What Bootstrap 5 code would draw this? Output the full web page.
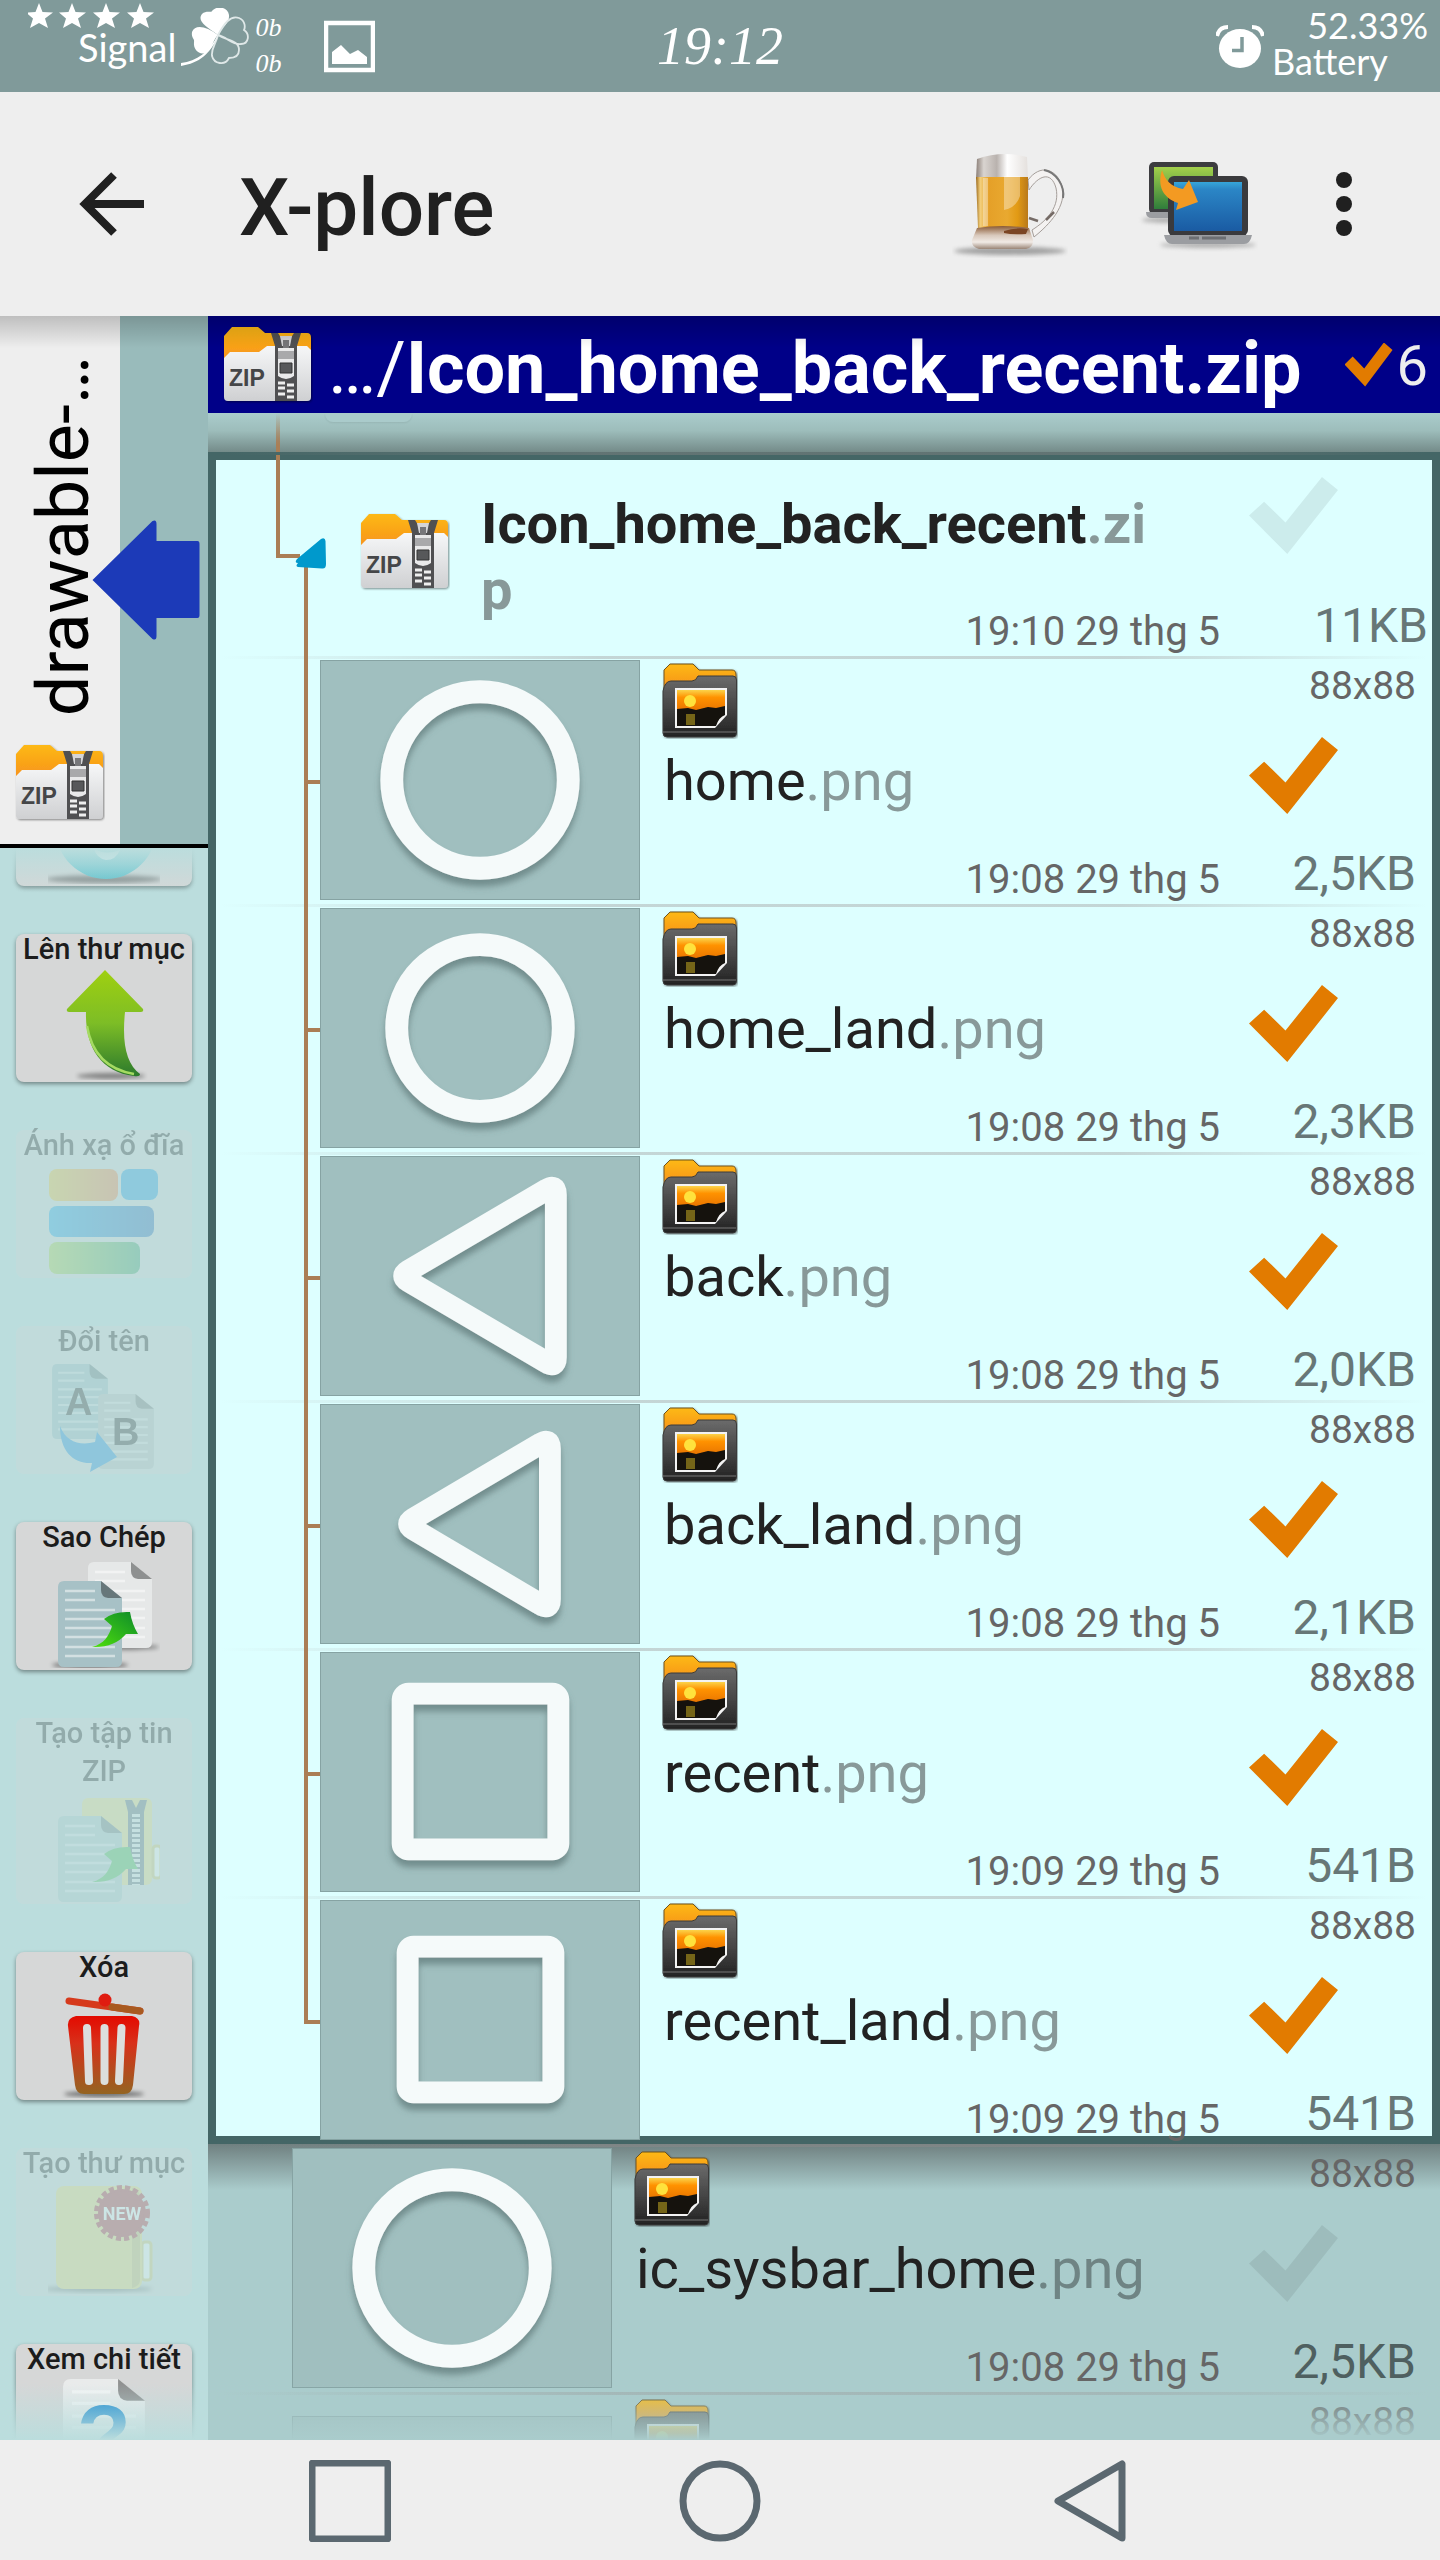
<!DOCTYPE html>
<html lang="vi">
<head>
<meta charset="utf-8">
<meta name="viewport" content="width=device-width, initial-scale=1">
<title>X-plore</title>
<link href="https://cdn.jsdelivr.net/npm/bootstrap@5.3.0/dist/css/bootstrap.min.css" rel="stylesheet">
<style>
  body { font-family: Roboto, "Noto Sans", sans-serif; color: #212121; background: #eee; line-height: 1.2; }
  svg { display: block; flex: none; }
  button { font-family: inherit; }
  .app { height: 100vh; overflow: hidden; }

  /* status bar */
  .statusbar { height: 92px; background: #809a9a; color: #fff; font-family: Lato, sans-serif; }
  .status-side { flex: 1 1 0; height: 92px; }
  .status-word { font-size: 36px; line-height: 36px; }
  .signal-block { padding: 3px 0 0 28px; }
  .signal-block .status-word { font-size: 38px; padding-left: 50px; }
  .clover { margin-left: 5px; }
  .rates { font: italic 26px/36px "Liberation Serif", serif; padding-top: 10px; margin-left: 6px; }
  .picture-note { margin-left: 43px; }
  .alarm { margin-top: 25px; }
  .clock { font: italic 54px/92px "Liberation Serif", serif; }
  .battery-block { width: 168px; padding: 7px 12px 0 0; margin-left: 8px; }

  /* toolbar */
  .toolbar { height: 224px; background: #eee; padding: 0 80px 0 64px; }
  .toolbar h1 { font-size: 80px; line-height: 96px; font-weight: 500; margin: 8px 0 0 79px; color: #202020; }
  .bar-btn { border: 0; background: none; padding: 0; }
  .toolbar-actions { gap: 70px; }

  /* left column */
  .sidecol { width: 208px; background: #bdd; }
  .other-pane { height: 532px; background: #9bb; border-bottom: 4px solid #000; }
  .other-tab { width: 120px; background: #eee; padding-bottom: 22px; gap: 28px; }
  .vertical-name { writing-mode: vertical-rl; transform: rotate(180deg); font-size: 72px; line-height: 84px; color: #000; margin-left: 8px; white-space: nowrap; }
  .swap-btn { top: 204px; left: 92px; }
  .under-shadow::before { content: ""; position: absolute; z-index: 3; inset: 0 0 auto 0; height: 32px; background: linear-gradient(rgba(0,0,0,.2), rgba(0,0,0,0)); pointer-events: none; }
  .tools { padding: 0 16px; }
  .tools-scroll { margin-top: -110px; gap: 48px; }
  .tool-btn { width: 100%; border: 0; border-radius: 8px; background: #d6d7d7; box-shadow: 0 2px 4px rgba(0,0,0,.4); padding: 0 0 2px; font-size: 29px; line-height: 38px; font-weight: 500; color: #1c1c1c; flex: none; white-space: nowrap; }
  .tool-btn span { display: block; margin-top: -4px; }
  .tool-btn svg { margin: 0 auto; }
  .tool-btn:disabled { opacity: .25; box-shadow: none; color: #1c1c1c; }
  .fade-top::before, .fade-end::after { content: ""; position: absolute; z-index: 2; left: 0; right: 0; pointer-events: none; }
  .fade-top::before { top: 0; height: 48px; background: linear-gradient(#bdd, rgba(187,221,221,0)); }
  .fade-end::after { bottom: 0; height: 56px; background: linear-gradient(rgba(187,221,221,0), #bdd); }

  /* file pane */
  .filepane { background: #acc; }
  .filepane.fade-end::after { background: linear-gradient(rgba(170,204,204,0), #acc); }
  .pathbar { height: 97px; background: #008; color: #fff; padding: 0 12px 0 15px; }
  .path-text { font-size: 72px; line-height: 84px; margin-left: 15px; white-space: nowrap; padding-top: 8px; }
  .picked { font-size: 56px; line-height: 66px; color: #eee; padding-top: 2px; }
  .picked-mark { width: 48px; height: 44px; }
  .tick-shape { clip-path: polygon(0 50%, 17% 32%, 41% 59%, 82% 0, 100% 17%, 43% 100%); background: #e27b00; }
  .strip { height: 39px; background: linear-gradient(#acc, #9dbdbb 45%, #748b89); }
  .strip i { margin-left: 5px; width: 87px; height: 9px; border-radius: 0 0 8px 8px; background: #aacbcb; box-shadow: 0 1px 2px rgba(0,0,0,.08); }

  .opened { background: #dff; box-shadow: inset 0 0 0 8px #466; padding-top: 3px; }
  .hairline { background-image: linear-gradient(90deg, rgba(150,140,140,0) 1%, rgba(150,140,140,.36) 32%, rgba(150,140,140,.36) 74%, rgba(150,140,140,0) 99%); background-repeat: no-repeat; background-position: left bottom; background-size: 100% 3px; }
  .thin { height: 3px; }
  .opened > .thin { margin-top: -3px; }
  .entry { height: 248px; }
  .entry-last { height: 245px; }
  .entry-zip { height: 204px; }
  .thumb { width: 320px; height: 240px; margin-top: 1px; background: #a0bfbf; border: 1px solid #86a3a3; }
  .entry-info { display: grid; flex: 1 1 0; height: 245px; min-width: 0; }
  .entry-zip .entry-info { height: 201px; }
  .entry-info > * { grid-area: 1 / 1; }
  .entry-name { font-size: 56px; line-height: 66px; color: #222; padding: 4px 0 0 22px; }
  .entry-name p { margin: 9px 0 0 2px; }
  .entry-zip .entry-name { padding: 36px 60px 0 31px; word-break: break-all; font-weight: 700; }
  .ext { color: #899; }
  .outside .ext { color: #6f8484; }
  .entry-date { font-size: 40px; line-height: 48px; color: #666; align-self: end; justify-self: end; }
  .entry-side { width: 220px; flex: none; height: 245px; padding: 3px 24px 2px 0; text-align: right; color: #666; font-size: 39px; line-height: 48px; }
  .entry-zip .entry-side { height: 201px; padding: 22px 12px 2px 0; }
  .entry-size { font-size: 48px; line-height: 56px; color: #677777; }
  .outside .entry-size { color: #4f6060; }
  .mark-box { appearance: none; width: 89px; height: 77px; border: 0; margin: 27px 0 0 29px; background: rgba(0,0,0,.075); clip-path: polygon(0 50%, 17% 32%, 41% 59%, 82% 0, 100% 17%, 43% 100%); }
  .mark-box:checked { background: #e27b00; }
  .entry-zip .mark-box { margin-top: 0; }
  .outside { background: linear-gradient(#6f8080, #acc 46px); }
  .outside .tree-gap { width: 84px; flex: none; }
  .late-thumb { margin-top: 21px; }
  .zip-at { margin-top: 58px; }

  /* navigation keys */
  .navkeys { height: 120px; background: #eee; padding-top: 2px; }
  .navkeys > div { width: 77%; }
</style>
</head>
<body>
<svg width="0" height="0" class="position-absolute" aria-hidden="true">
  <defs>
    <linearGradient id="gOr" x1="0" y1="0" x2="0" y2="1"><stop offset="0" stop-color="#fdb913"/><stop offset="1" stop-color="#f68b1f"/></linearGradient>
    <linearGradient id="gWh" x1="0" y1="0" x2="0" y2="1"><stop offset="0" stop-color="#f6f7f8"/><stop offset="1" stop-color="#cfd0d2"/></linearGradient>
    <linearGradient id="gDk" x1="0" y1="0" x2="0" y2="1"><stop offset="0" stop-color="#6b6b6b"/><stop offset="1" stop-color="#222"/></linearGradient>
    <linearGradient id="gSky" x1="0" y1="0" x2="0" y2="1"><stop offset="0" stop-color="#fbd34a"/><stop offset=".35" stop-color="#ff9200"/><stop offset="1" stop-color="#e87400"/></linearGradient>
    <linearGradient id="gGr" x1="0" y1="0" x2="0" y2="1"><stop offset="0" stop-color="#9fd010"/><stop offset=".5" stop-color="#7dbd26"/><stop offset="1" stop-color="#2c7a2c"/></linearGradient>
    <linearGradient id="gRed" x1="0" y1="0" x2="0" y2="1"><stop offset="0" stop-color="#e30a00"/><stop offset=".35" stop-color="#d8301a"/><stop offset="1" stop-color="#946422"/></linearGradient>
    <linearGradient id="gArr" x1="1" y1="0" x2="0" y2="1"><stop offset="0" stop-color="#0c8a2a"/><stop offset="1" stop-color="#4fe00c"/></linearGradient>
    <linearGradient id="gTeal" x1="0" y1="0" x2="0" y2="1"><stop offset="0" stop-color="#cdeef0"/><stop offset="1" stop-color="#4fbcc9"/></linearGradient>
    <linearGradient id="gD1"><stop offset="0" stop-color="#f0c030"/><stop offset="1" stop-color="#f07c3c"/></linearGradient>
    <linearGradient id="gD2"><stop offset="0" stop-color="#12a0e8"/><stop offset="1" stop-color="#1a62b4"/></linearGradient>
    <linearGradient id="gD3"><stop offset="0" stop-color="#a8d040"/><stop offset="1" stop-color="#2f9a60"/></linearGradient>
    <linearGradient id="gBeer" x1="0" y1="0" x2="1" y2="0"><stop offset="0" stop-color="#9c6a1c"/><stop offset=".08" stop-color="#f3cf7c"/><stop offset=".25" stop-color="#e5a028"/><stop offset=".6" stop-color="#e9a930"/><stop offset=".8" stop-color="#e29a14"/><stop offset="1" stop-color="#b9791a"/></linearGradient>
    <linearGradient id="gGlass" x1="0" y1="0" x2="1" y2="0"><stop offset="0" stop-color="#8b7f78"/><stop offset=".15" stop-color="#d9d4d0"/><stop offset=".4" stop-color="#b9b2ae"/><stop offset=".6" stop-color="#fff"/><stop offset="1" stop-color="#e4e0dd"/></linearGradient>
    <linearGradient id="gBase" x1="0" y1="0" x2="0" y2="1"><stop offset="0" stop-color="#8a5a35"/><stop offset=".4" stop-color="#d8c8bb"/><stop offset=".7" stop-color="#f1ebe6"/><stop offset="1" stop-color="#9a8576"/></linearGradient>
    <linearGradient id="gScrG" x1="0" y1="0" x2="0" y2="1"><stop offset="0" stop-color="#a3d04b"/><stop offset="1" stop-color="#2f7d3b"/></linearGradient>
    <linearGradient id="gScrB" x1="0" y1="0" x2="0" y2="1"><stop offset="0" stop-color="#36a6da"/><stop offset=".15" stop-color="#2b86c6"/><stop offset="1" stop-color="#1a5ba3"/></linearGradient>
    <filter id="fS" x="-20%" y="-20%" width="140%" height="150%"><feDropShadow dx="0" dy="7" stdDeviation="3" flood-color="#4d6363" flood-opacity=".55"/></filter>
    <filter id="fs1" x="-10%" y="-10%" width="120%" height="125%"><feDropShadow dx="1" dy="1" stdDeviation="1" flood-opacity=".45"/></filter>
    <filter id="fB" x="-20%" y="-100%" width="140%" height="300%"><feGaussianBlur stdDeviation="2"/></filter>
  </defs>

  <symbol id="zipfile" viewBox="0 0 90 78">
    <g filter="url(#fs1)">
      <path d="M1 10L9 1H35L42 7H84Q88 7 88 12V40H1Z" fill="url(#gOr)"/>
      <path d="M1 32L7 26H36L44 20H84L88 24V71Q88 75 84 75H5Q1 75 1 71Z" fill="url(#gWh)"/>
    </g>
    <path d="M48 7H55L60 15H66L71 7H78L74 20V75H52V20Z" fill="#505052"/>
    <path d="M57 10H69L67 20H59Z" fill="#d5d5d7"/>
    <path d="M60 14H66V22H60Z" fill="#77777a"/>
    <path d="M55 22H71V50Q63 56 55 50Z" fill="#e9e9ea"/>
    <path d="M55 25H71V33H55Z" fill="#a9a9ab"/>
    <path d="M57 37H69V47H57Z" fill="#57585a" stroke="#333"/>
    <path d="M55 57H62M64 59H71M55 62H62M64 65H71M55 68H62M64 71H71" stroke="#eee" stroke-width="3"/>
    <text x="6" y="60" font-family="Liberation Sans, Arial, sans-serif" font-weight="700" font-size="23" fill="#454648">ZIP</text>
  </symbol>

  <symbol id="pngfile" viewBox="0 0 76 76">
    <g filter="url(#fs1)">
      <path d="M2 24V7L8 1H31L37 7H70Q74 7 74 12V30H2Z" fill="url(#gOr)" stroke="#6f531f"/>
      <path d="M1 28Q3 18 9 18H30Q34 18 36 13H71Q74.500 13 74.500 17V70Q74.500 74 71 74H5Q1 74 1 70Z" fill="url(#gDk)" stroke="#3a3a3a"/>
    </g>
    <path d="M1 69H74" stroke="#777"/>
    <path d="M13 25H65V52L53 65H13Z" fill="#f3f3f3"/>
    <path d="M15 27H63V48H15Z" fill="url(#gSky)"/>
    <path d="M15 46L26 45L34 47L46 44L54 45L63 43V52Q57 54 54 63H15Z" fill="#15120d"/>
    <path d="M24 51H33V62H24Z" fill="#8d7a1c" opacity=".8"/>
    <circle cx="28" cy="38" r="6" fill="#ffe23c"/>
  </symbol>

  <symbol id="ring" viewBox="0 0 320 240"><circle cx="160" cy="120" r="89" fill="none" stroke="#f5fafa" stroke-width="23" filter="url(#fS)"/></symbol>
  <symbol id="ringland" viewBox="0 0 320 240"><circle cx="160" cy="120" r="84" fill="none" stroke="#f5fafa" stroke-width="23" filter="url(#fS)"/></symbol>
  <symbol id="tri" viewBox="0 0 320 240"><path d="M88 114.600L227 33Q236.500 27 236.500 38V202Q236.500 213 227 207L88 125.400Q79 120 88 114.600Z" fill="none" stroke="#f5fafa" stroke-width="22" stroke-linejoin="round" filter="url(#fS)"/></symbol>
  <symbol id="triland" viewBox="0 0 320 240"><path d="M93 114.600L221 39Q230.500 33 230.500 44V196Q230.500 207 221 201L93 125.400Q84 120 93 114.600Z" fill="none" stroke="#f5fafa" stroke-width="22" stroke-linejoin="round" filter="url(#fS)"/></symbol>
  <symbol id="sq" viewBox="0 0 320 240"><rect x="82" y="41" width="157" height="157" rx="6" fill="none" stroke="#f5fafa" stroke-width="22" filter="url(#fS)"/></symbol>
  <symbol id="sqland" viewBox="0 0 320 240"><rect x="87" y="46" width="147" height="147" rx="6" fill="none" stroke="#f5fafa" stroke-width="22" filter="url(#fS)"/></symbol>

  <symbol id="branch" viewBox="0 0 112 248"><path d="M98 0V248M98 123H112" stroke="#aa7e55" stroke-width="4" fill="none"/></symbol>
  <symbol id="sheet" viewBox="0 0 64 86">
    <path d="M6 0H43L64 17V80Q64 86 58 86H6Q0 86 0 80V6Q0 0 6 0Z"/>
    <path d="M43 0L64 17H50Q43 16 43 9Z" fill="#000" opacity=".38"/>
    <path d="M7 10H37M7 19H37M7 29H57M7 38H57M7 47H57M7 56H57M7 66H57M7 75H57" stroke="#fff" stroke-width="2.500" opacity=".5"/>
  </symbol>
</svg>

<div class="app d-flex flex-column">
  <header class="statusbar d-flex justify-content-between flex-shrink-0">
    <div class="status-side d-flex">
      <div class="signal-block">
        <svg width="128" height="26" viewBox="0 0 128 26" fill="#fff"><path id="star" d="M11 0L14.500 9L25 9.500L17 15.500L20 25L11 20L2 25L5 15.500L-2 9.500L7.500 9Z"/><use href="#star" x="33"/><use href="#star" x="67"/><use href="#star" x="101"/></svg>
        <div class="status-word">Signal</div>
      </div>
      <svg class="clover mt-2" width="68" height="60" viewBox="0 0 68 60">
        <path d="M37 27C24 18 16 13 21 6C25 2 30 5 31 3C36 -3 47 -1 48 7C49 15 41 19 37 27Z" fill="#fff"/>
        <path d="M37 27C25 18 14 16 11 24C10 30 14 31 13 34C12 43 20 48 26 44C32 40 31 33 37 27Z" fill="#fff"/>
        <path d="M37 27C43 16 49 7 58 10C65 13 64 20 63 22C69 26 68 36 60 36C51 37 46 29 37 27C46 33 58 32 58 42C58 50 50 50 48 50C44 58 33 56 31 48C30 40 35 36 37 27Z" fill="none" stroke="#dfe8e8" stroke-width="1.800"/>
        <path d="M37 27C30 46 18 55 0 58V55C16 53 28 44 37 27Z" fill="#fff"/>
      </svg>
      <div class="rates"><div>0b</div><div>0b</div></div>
      <svg class="picture-note" width="51" height="92" viewBox="0 -21 51 92"><rect x="2" y="2" width="47" height="47" fill="none" stroke="#fff" stroke-width="4.500"/><path d="M8 43V31L17 24L26 33L34 29L43 36V43Z" fill="#fff"/></svg>
    </div>
    <time class="clock">19:12</time>
    <div class="status-side d-flex justify-content-end">
      <svg class="alarm" width="48" height="44" viewBox="0 0 48 44"><ellipse cx="24" cy="23.500" rx="21" ry="19.500" fill="#fff"/><path d="M1 11Q3 2 12 2M47 11Q45 2 36 2" stroke="#fff" stroke-width="4" fill="none"/><path d="M26 12V25.500H16" stroke="#809a9a" stroke-width="3.500" fill="none"/></svg>
      <div class="battery-block status-word"><div class="text-end">52.33%</div><div>Battery</div></div>
    </div>
  </header>

  <nav class="toolbar d-flex align-items-center flex-shrink-0">
    <button class="bar-btn" aria-label="Back"><svg width="96" height="96" viewBox="0 0 96 96"><path d="M80 48H22M50 19L21 48L50 77" fill="none" stroke="#202020" stroke-width="8"/></svg></button>
    <h1>X-plore</h1>
    <div class="toolbar-actions d-flex align-items-center ms-auto">
      <button class="bar-btn" aria-label="Donate"><svg width="116" height="108" viewBox="0 0 116 108">
        <ellipse cx="58" cy="101" rx="56" ry="4" fill="#777" opacity=".65" filter="url(#fB)"/>
        <path d="M76 30C88 14 104 18 110 36C115 56 98 74 82 87L80 80C96 70 108 56 104 38C99 20 86 26 77 40Z" fill="#f4f2f1" stroke="#a59e9a" stroke-width="1"/>
        <path d="M92 20C104 22 113 36 111 48" stroke="#777" stroke-width="2" fill="none"/><path d="M77 68L86 71M94 70L102 62" stroke="#756b66" stroke-width="2.500"/>
        <path d="M25 9Q50 0 75 7L76 29H24Z" fill="url(#gGlass)"/>
        <path d="M24 27H76V78H26Z" fill="url(#gBeer)"/>
        <path d="M31 28H36V76H31ZM52 26H68V46Q64 58 52 60Z" fill="#fff" opacity=".35"/>
        <path d="M25 78Q50 74 77 78L81 90Q81 98 74 99H27Q19 97 20 90Z" fill="url(#gBase)"/>
        <path d="M52 81Q64 77 76 79L74 84Q60 85 52 83Z" fill="#7b4523"/>
      </svg></button>
      <button class="bar-btn" aria-label="Wi-Fi"><svg width="120" height="96" viewBox="0 0 120 96">
        <ellipse cx="70" cy="89" rx="48" ry="3" fill="#888" opacity=".6" filter="url(#fB)"/><ellipse cx="30" cy="64" rx="26" ry="3" fill="#888" opacity=".6" filter="url(#fB)"/>
        <rect x="11" y="6" width="69" height="52" rx="5" fill="#3c3c3f"/><rect x="16" y="11" width="59" height="42" fill="url(#gScrG)"/>
        <path d="M8 56H32V62H14Q8 62 8 56Z" fill="#9b9da1"/>
        <rect x="30" y="20" width="80" height="60" rx="6" fill="#3a3a3d"/><rect x="36" y="26" width="68" height="49" fill="url(#gScrB)"/>
        <path d="M26 79H114Q112 88 106 88H34Q28 88 26 79Z" fill="#9b9da1"/><path d="M51 82H61M64 82H88" stroke="#6d6f73" stroke-width="3"/>
        <path d="M24 14C27 24 33 31 45 33L51 24L60 46L38 54L40 47C25 42 19 30 24 14Z" fill="#f39a22"/>
      </svg></button>
      <button class="bar-btn" aria-label="Menu"><svg width="32" height="68" viewBox="0 0 32 68" fill="#202020"><circle cx="16" cy="10" r="8"/><circle cx="16" cy="34" r="8"/><circle cx="16" cy="58" r="8"/></svg></button>
    </div>
  </nav>

  <div class="d-flex flex-grow-1 overflow-hidden position-relative under-shadow">
    <aside class="sidecol d-flex flex-column flex-shrink-0">
      <div class="other-pane position-relative flex-shrink-0 d-flex">
        <div class="other-tab d-flex flex-column justify-content-end align-items-center">
          <div class="vertical-name">drawable-…</div>
          <svg width="90" height="78"><use href="#zipfile"/></svg>
        </div>
        <button class="bar-btn swap-btn position-absolute" aria-label="Switch pane"><svg width="108" height="120" viewBox="0 0 107 120"><path d="M0 60L60 1Q64 -1 64 4V21H105Q107 21 107 24V95Q107 98 105 98H64V116Q64 121 60 119Z" fill="#1c3ab8"/></svg></button>
      </div>
      <div class="tools flex-grow-1 overflow-hidden position-relative fade-top fade-end">
        <div class="tools-scroll d-flex flex-column">
          <button class="tool-btn" aria-label="Web"><span>&nbsp;</span>
            <svg width="112" height="112"><ellipse cx="56" cy="107" rx="58" ry="4" opacity=".4" filter="url(#fB)"/><circle cx="58" cy="57" r="50" fill="url(#gTeal)"/><path d="M46 76Q56 84 72 78Q68 88 58 88Q48 86 46 76Z" fill="#d5eef0"/></svg></button>
          <button class="tool-btn"><span>Lên thư mục</span>
            <svg width="112" height="112"><ellipse cx="63" cy="108" rx="34" ry="3" opacity=".4" filter="url(#fB)"/><path d="M57 2L95 41Q96 44 93 44H77Q72 92 92 106Q92 109 86 108C52 104 37 78 38 44H21Q18 44 19 41Z" fill="url(#gGr)"/><path d="M39 58C44 88 62 102 86 106" stroke="#a5db62" stroke-width="2.500" fill="none"/></svg></button>
          <button class="tool-btn" disabled><span>Ánh xạ ổ đĩa</span>
            <svg width="112" height="112"><rect x="1" y="5" width="69" height="32" rx="8" fill="url(#gD1)"/><rect x="73" y="5" width="37" height="31" rx="8" fill="#0e96e0"/><rect x="1" y="42" width="105" height="31" rx="8" fill="url(#gD2)"/><rect x="1" y="78" width="91" height="32" rx="8" fill="url(#gD3)"/></svg></button>
          <button class="tool-btn" disabled><span>Đổi tên</span>
            <svg width="112" height="112" font-family="Liberation Sans, Arial, sans-serif" font-weight="700"><use href="#sheet" x="4" y="4" width="56" height="75" fill="#94b4ba"/><text x="17" y="55" font-size="38" fill="#222">A</text><use href="#sheet" x="50" y="34" width="56" height="75" fill="#b4b8b8"/><text x="64" y="85" font-size="38" fill="#222">B</text><path d="M12 66C18 82 32 86 47 82L49 72L69 97L42 112L44 103C26 104 12 92 12 66Z" fill="#0e86dc"/></svg></button>
          <button class="tool-btn"><span>Sao Chép</span>
            <svg width="112" height="112"><ellipse cx="75" cy="91" rx="36" ry="3" opacity=".4" filter="url(#fB)"/><ellipse cx="42" cy="109" rx="38" ry="3" opacity=".5" filter="url(#fB)"/><use href="#sheet" x="40" y="6" width="64" height="86" fill="#e6e8e8"/><use href="#sheet" x="10" y="25" width="64" height="86" fill="#a7c1c6"/><path d="M44 91C56 88 61 80 64 70L56 63Q66 55 82 56Q84 68 90 78L78 78Q66 92 44 91Z" fill="url(#gArr)"/></svg></button>
          <button class="tool-btn" disabled><span>Tạo tập tin<br>ZIP</span>
            <svg width="112" height="112"><rect x="34" y="8" width="70" height="87" rx="6" fill="#f0dc80"/><rect x="105" y="56" width="8" height="32" rx="3" fill="#fff" stroke="#d9c56b" stroke-width="3"/><path d="M77 10H84L88 18L92 10H99L96 22V95H80V22Z" fill="#5a6a74"/><path d="M88 24V95" stroke="#e5e9ec" stroke-width="8" stroke-dasharray="3 2"/><use href="#sheet" x="10" y="26" width="64" height="86" fill="#a9c2c4"/><path d="M44 92C56 89 61 81 64 71L56 64Q66 56 82 57Q84 69 90 79L78 79Q66 93 44 92Z" fill="#3fb84a"/></svg></button>
          <button class="tool-btn"><span>Xóa</span>
            <svg width="112" height="112"><ellipse cx="56" cy="108" rx="40" ry="3" opacity=".5" filter="url(#fB)"/><path d="M21 15L92 25" stroke="#d63a1c" stroke-width="7" stroke-linecap="round"/><path d="M64 21L92 25" stroke="#a85a20" stroke-width="7" stroke-linecap="round"/><circle cx="57" cy="14" r="6.500" fill="#e01c10"/><path d="M28 30H84Q93 32 91 40L85 99Q84 108 76 108H36Q28 108 27 99L20 40Q19 32 28 30Z" fill="url(#gRed)"/><path d="M39 42L41 95M56.500 42V95M73.500 42L71 95" stroke="#dcdedd" stroke-width="8" stroke-linecap="round"/></svg></button>
          <button class="tool-btn" disabled><span>Tạo thư mục</span>
            <svg width="112" height="112"><ellipse cx="50" cy="107" rx="54" ry="3" opacity=".5" filter="url(#fB)"/><rect x="94" y="60" width="9" height="38" rx="3" fill="#fff" stroke="#d9c56b" stroke-width="3"/><rect x="8" y="4" width="86" height="103" rx="8" fill="#f0d870"/><path d="M84 6Q92 8 92 14V98Q92 104 84 106Z" fill="#d0b860"/><circle cx="74" cy="31" r="24" fill="#b0202a"/><circle cx="74" cy="31" r="25" fill="none" stroke="#b0202a" stroke-width="6" stroke-dasharray="5 3"/><text x="74" y="38" text-anchor="middle" font-size="18" font-weight="700" fill="#fff">NEW</text></svg></button>
          <button class="tool-btn"><span>Xem chi tiết</span>
            <svg width="112" height="112"><use href="#sheet" x="15" y="1" width="82" height="110" fill="#e9ebeb"/><text x="56" y="88" text-anchor="middle" font-family="Liberation Sans, Arial, sans-serif" font-size="88" font-weight="700" fill="#1186cf">?</text></svg></button>
        </div>
      </div>
    </aside>

    <main class="filepane flex-grow-1 overflow-hidden position-relative fade-end">
      <div class="pathbar d-flex align-items-center">
        <svg width="90" height="78"><use href="#zipfile"/></svg>
        <div class="path-text">…/<b>Icon_home_back_recent.zip</b></div>
        <div class="d-flex align-items-center ms-auto gap-1"><span class="picked-mark tick-shape"></span><span class="picked">6</span></div>
      </div>
      <div class="strip d-flex">
        <svg width="112" height="39"><defs><linearGradient id="gLn" gradientUnits="userSpaceOnUse" x1="0" y1="0" x2="0" y2="32"><stop offset="0" stop-color="#aa7e55" stop-opacity="0"/><stop offset="1" stop-color="#aa7e55"/></linearGradient></defs><path d="M68 0H72V39H68Z" fill="url(#gLn)"/></svg><i></i>
      </div>

      <section class="opened">
        <div class="hairline thin"></div>
        <div class="entry entry-zip hairline d-flex">
          <svg width="152" height="204"><path d="M70 -3V101H92M98 110V204" stroke="#aa7e55" stroke-width="4" fill="none"/><path d="M90 108Q86 108 89 104L113 84Q117 82 117.500 86L118 109Q118 114 114 113.500L90 112Q87 111 90 108Z" fill="#0099cc"/></svg>
          <svg class="zip-at" width="90" height="78"><use href="#zipfile"/></svg>
          <div class="entry-info">
            <div class="entry-name">Icon_home_back_recent<span class="ext">.zip</span></div>
            <div class="entry-date">19:10 29 thg 5</div>
          </div>
          <div class="entry-side d-flex flex-column justify-content-between"><input type="checkbox" class="mark-box" aria-label="Icon_home_back_recent.zip"><div class="entry-size">11KB</div></div>
        </div>

        <div class="entry hairline d-flex">
          <svg width="112" height="248"><use href="#branch"/></svg>
          <svg class="thumb"><use href="#ring"/></svg>
          <div class="entry-info"><div class="entry-name"><svg width="76" height="76"><use href="#pngfile"/></svg><p>home<span class="ext">.png</span></p></div><div class="entry-date">19:08 29 thg 5</div></div>
          <div class="entry-side d-flex flex-column"><span>88x88</span><input type="checkbox" class="mark-box" checked aria-label="home.png"><div class="entry-size mt-auto">2,5KB</div></div>
        </div>
        <div class="entry hairline d-flex">
          <svg width="112" height="248"><use href="#branch"/></svg>
          <svg class="thumb"><use href="#ringland"/></svg>
          <div class="entry-info"><div class="entry-name"><svg width="76" height="76"><use href="#pngfile"/></svg><p>home_land<span class="ext">.png</span></p></div><div class="entry-date">19:08 29 thg 5</div></div>
          <div class="entry-side d-flex flex-column"><span>88x88</span><input type="checkbox" class="mark-box" checked aria-label="home_land.png"><div class="entry-size mt-auto">2,3KB</div></div>
        </div>
        <div class="entry hairline d-flex">
          <svg width="112" height="248"><use href="#branch"/></svg>
          <svg class="thumb"><use href="#tri"/></svg>
          <div class="entry-info"><div class="entry-name"><svg width="76" height="76"><use href="#pngfile"/></svg><p>back<span class="ext">.png</span></p></div><div class="entry-date">19:08 29 thg 5</div></div>
          <div class="entry-side d-flex flex-column"><span>88x88</span><input type="checkbox" class="mark-box" checked aria-label="back.png"><div class="entry-size mt-auto">2,0KB</div></div>
        </div>
        <div class="entry hairline d-flex">
          <svg width="112" height="248"><use href="#branch"/></svg>
          <svg class="thumb"><use href="#triland"/></svg>
          <div class="entry-info"><div class="entry-name"><svg width="76" height="76"><use href="#pngfile"/></svg><p>back_land<span class="ext">.png</span></p></div><div class="entry-date">19:08 29 thg 5</div></div>
          <div class="entry-side d-flex flex-column"><span>88x88</span><input type="checkbox" class="mark-box" checked aria-label="back_land.png"><div class="entry-size mt-auto">2,1KB</div></div>
        </div>
        <div class="entry hairline d-flex">
          <svg width="112" height="248"><use href="#branch"/></svg>
          <svg class="thumb"><use href="#sq"/></svg>
          <div class="entry-info"><div class="entry-name"><svg width="76" height="76"><use href="#pngfile"/></svg><p>recent<span class="ext">.png</span></p></div><div class="entry-date">19:09 29 thg 5</div></div>
          <div class="entry-side d-flex flex-column"><span>88x88</span><input type="checkbox" class="mark-box" checked aria-label="recent.png"><div class="entry-size mt-auto">541B</div></div>
        </div>
        <div class="entry-last d-flex">
          <svg width="112" height="245"><path d="M98 0V123H112" stroke="#aa7e55" stroke-width="4" fill="none"/></svg>
          <svg class="thumb"><use href="#sqland"/></svg>
          <div class="entry-info"><div class="entry-name"><svg width="76" height="76"><use href="#pngfile"/></svg><p>recent_land<span class="ext">.png</span></p></div><div class="entry-date">19:09 29 thg 5</div></div>
          <div class="entry-side d-flex flex-column"><span>88x88</span><input type="checkbox" class="mark-box" checked aria-label="recent_land.png"><div class="entry-size mt-auto">541B</div></div>
        </div>
      </section>

      <section class="outside">
        <div class="hairline thin"></div>
        <div class="entry hairline d-flex">
          <div class="tree-gap"></div>
          <svg class="thumb"><use href="#ring"/></svg>
          <div class="entry-info"><div class="entry-name"><svg width="76" height="76"><use href="#pngfile"/></svg><p>ic_sysbar_home<span class="ext">.png</span></p></div><div class="entry-date">19:08 29 thg 5</div></div>
          <div class="entry-side d-flex flex-column"><span>88x88</span><input type="checkbox" class="mark-box" aria-label="ic_sysbar_home.png"><div class="entry-size mt-auto">2,5KB</div></div>
        </div>
        <div class="entry d-flex">
          <div class="tree-gap"></div>
          <svg class="thumb late-thumb"></svg>
          <div class="entry-info"><div class="entry-name"><svg width="76" height="76"><use href="#pngfile"/></svg></div></div>
          <div class="entry-side d-flex flex-column"><span>88x88</span></div>
        </div>
      </section>
    </main>
  </div>

  <footer class="navkeys d-flex justify-content-center align-items-center flex-shrink-0">
    <div class="d-flex">
      <button class="bar-btn flex-fill" aria-label="Recent"><svg class="mx-auto" width="82" height="82" fill="none" stroke="#5b6870" stroke-width="7"><rect x="3" y="3" width="76" height="76" rx="1"/></svg></button>
      <button class="bar-btn flex-fill" aria-label="Home"><svg class="mx-auto" width="82" height="82" fill="none" stroke="#5b6870" stroke-width="7"><circle cx="41" cy="41" r="37"/></svg></button>
      <button class="bar-btn flex-fill" aria-label="Back"><svg class="mx-auto" width="82" height="82" fill="none" stroke="#5b6870" stroke-width="7" stroke-linejoin="round"><path d="M73 4V78L9 41Z"/></svg></button>
    </div>
  </footer>
</div>
<script src="https://cdn.jsdelivr.net/npm/bootstrap@5.3.0/dist/js/bootstrap.bundle.min.js"></script>
</body>
</html>
